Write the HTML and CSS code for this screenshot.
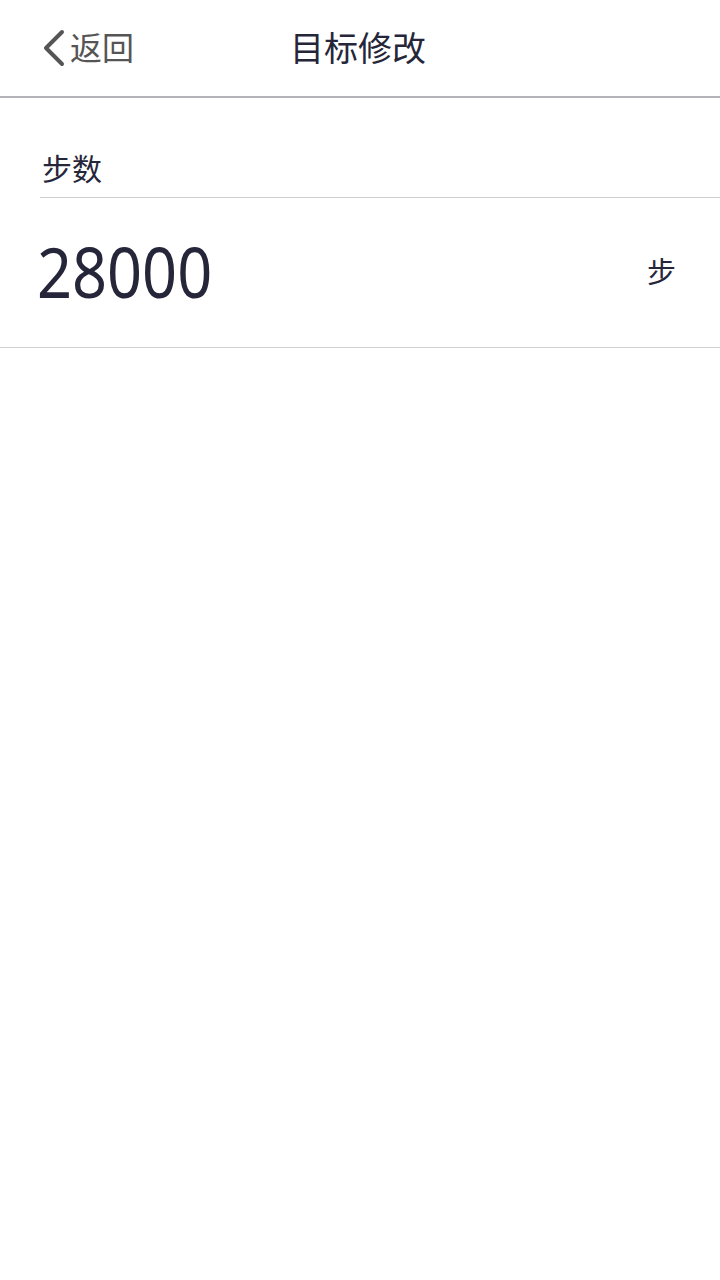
FILE: index.html
```html
<!DOCTYPE html>
<html lang="zh">
<head>
<meta charset="utf-8">
<link rel="stylesheet" href="styles.css">
</head>
<body>
<header class="topbar">
  <div class="back">
    <svg class="chev" width="26" height="38" viewBox="0 0 26 38"><path d="M22 3 L6 19 L22 35" fill="none" stroke="#555" stroke-width="4" stroke-linecap="round" stroke-linejoin="round"/></svg>
    <span class="back-text">返回</span>
  </div>
  <h1 class="title">目标修改</h1>
</header>
<section class="form">
  <div class="label">步数</div>
  <div class="row">
    <span class="value">28000</span>
    <span class="unit">步</span>
  </div>
</section>
</body>
</html>
```
FILE: styles.css
```css
* { box-sizing: border-box; }
body {
  margin: 0;
  background: #fff;
  font-family: "Noto Sans", "Noto Sans CJK SC", sans-serif;
  color: #26263a;
}
.topbar {
  position: relative;
  height: 98px;
  border-bottom: 2px solid #b4b4b8;
  display: flex;
  align-items: center;
  justify-content: center;
}
.back {
  position: absolute;
  left: 40px;
  top: 28px;
  display: flex;
  align-items: center;
  gap: 4px;
}
.chev { display: block; }
.back-text {
  font-size: 32px;
  color: #555;
  line-height: 40px;
}
.title {
  margin: 0;
  font-weight: 400;
  font-size: 34px;
  line-height: 40px;
  margin-left: -4px;
  color: #26263a;
}
.form {
  border-bottom: 1px solid #d0d0d0;
}
.label {
  margin-left: 40px;
  padding-top: 49px;
  height: 100px;
  font-size: 30px;
  line-height: 44px;
  padding-left: 2px;
  border-bottom: 1px solid #cfcfcf;
}
.row {
  height: 149px;
  display: flex;
  align-items: center;
  justify-content: space-between;
  padding-left: 37px;
  padding-right: 44px;
}
.value {
  font-family: "Noto Sans", sans-serif;
  font-weight: 400;
  font-size: 70px;
  line-height: 80px;
  margin-top: -3px;
  display: inline-block;
  transform: scaleX(0.875);
  transform-origin: left center;
}
.unit {
  font-size: 29px;
  line-height: 40px;
  margin-top: -2px;
}
```
